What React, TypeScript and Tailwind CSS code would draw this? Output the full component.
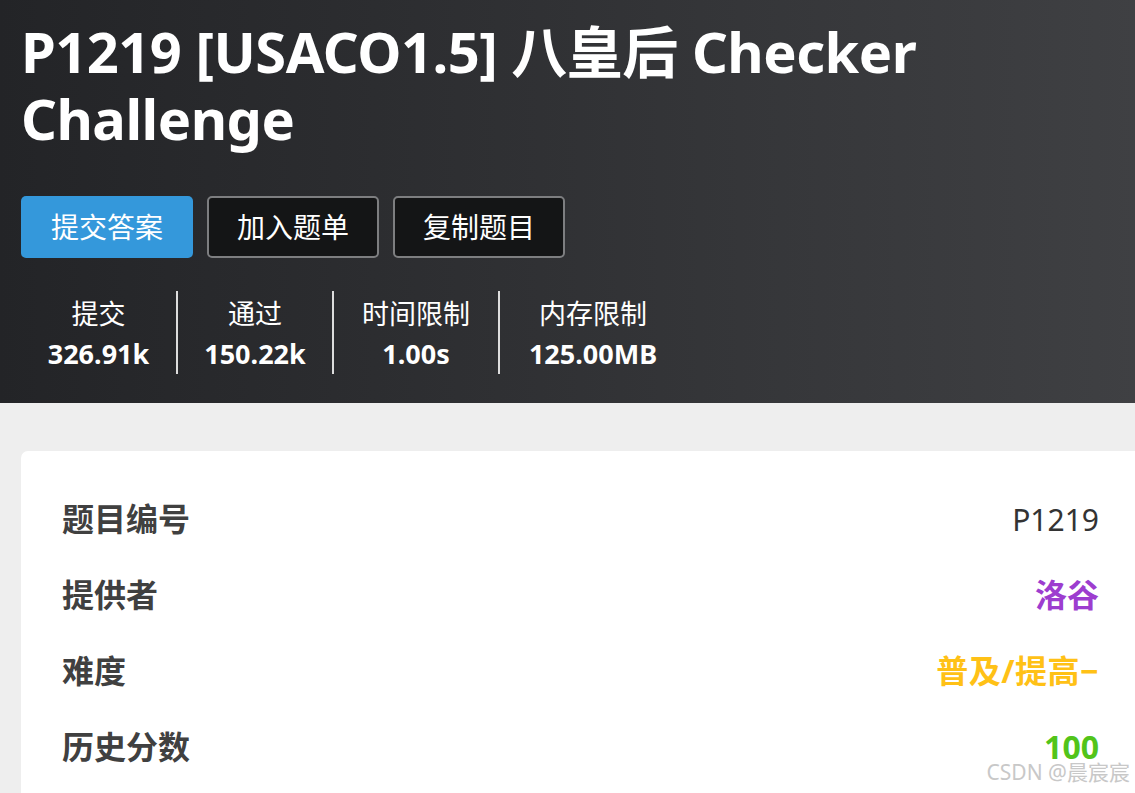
import React from "react";

const stats = [
  { label: "提交", value: "326.91k", w: "w-[157px] border-r-2 border-[#dddddd]" },
  { label: "通过", value: "150.22k", w: "w-[156px] border-r-2 border-[#dddddd]" },
  { label: "时间限制", value: "1.00s", w: "w-[166px] border-r-2 border-[#dddddd]" },
  { label: "内存限制", value: "125.00MB", w: "w-[186px]" },
];

const rows = [
  { label: "题目编号", value: "P1219", cls: "text-[#333] font-normal text-[30px]" },
  { label: "提供者", value: "洛谷", cls: "text-[#9d3dcf] font-bold text-[32px]" },
  { label: "难度", value: "普及/提高−", cls: "text-[#ffc116] font-bold text-[32px] tracking-[0.5px]" },
  { label: "历史分数", value: "100", cls: "text-[#52c41a] font-bold text-[32px]" },
];

export default function App() {
  return (
    <div
      className="w-[1135px] h-[793px] overflow-hidden bg-[#eeeeee] relative"
      style={{ fontFamily: '"Noto Sans", "Noto Sans CJK SC", sans-serif' }}
    >
      <div className="h-[403px] bg-gradient-to-r from-[#232427] to-[#3f4043] pl-[21px] pt-[18px]">
        <h1 className="text-white font-bold text-[56px] leading-[67px] tracking-[-0.5px] w-[1000px]">
          P1219 [USACO1.5] 八皇后 Checker Challenge
        </h1>
        <div className="flex gap-[14px] mt-[44px]">
          <button className="w-[172px] h-[62px] rounded-[5px] bg-[#3498db] text-white text-[28px]">
            提交答案
          </button>
          <button className="w-[172px] h-[62px] rounded-[5px] bg-[#141516] border-2 border-[#7d7e80] text-white text-[28px]">
            加入题单
          </button>
          <button className="w-[172px] h-[62px] rounded-[5px] bg-[#141516] border-2 border-[#7d7e80] text-white text-[28px]">
            复制题目
          </button>
        </div>
        <div className="flex mt-[33px]">
          {stats.map((s) => (
            <div
              key={s.label}
              className={`flex flex-col items-center h-[83px] pt-[3px] ${s.w}`}
            >
              <div className="text-white text-[27px] leading-[40px]">{s.label}</div>
              <div className="text-white font-bold text-[27px] leading-[40px]">{s.value}</div>
            </div>
          ))}
        </div>
      </div>
      <div className="ml-[21px] mt-[48px] bg-white rounded-tl-[7px] pl-[41px] pr-[36px] pt-[30px]">
        {rows.map((r) => (
          <div key={r.label} className="flex justify-between items-center h-[76px]">
            <span className="text-[32px] font-bold text-[#404040]">{r.label}</span>
            <span className={r.cls}>{r.value}</span>
          </div>
        ))}
        <div className="h-[40px]" />
      </div>
      <div className="absolute right-[5px] bottom-[5px] text-[21px] text-[#c8c8c8]">
        CSDN @晨宸宸
      </div>
    </div>
  );
}
